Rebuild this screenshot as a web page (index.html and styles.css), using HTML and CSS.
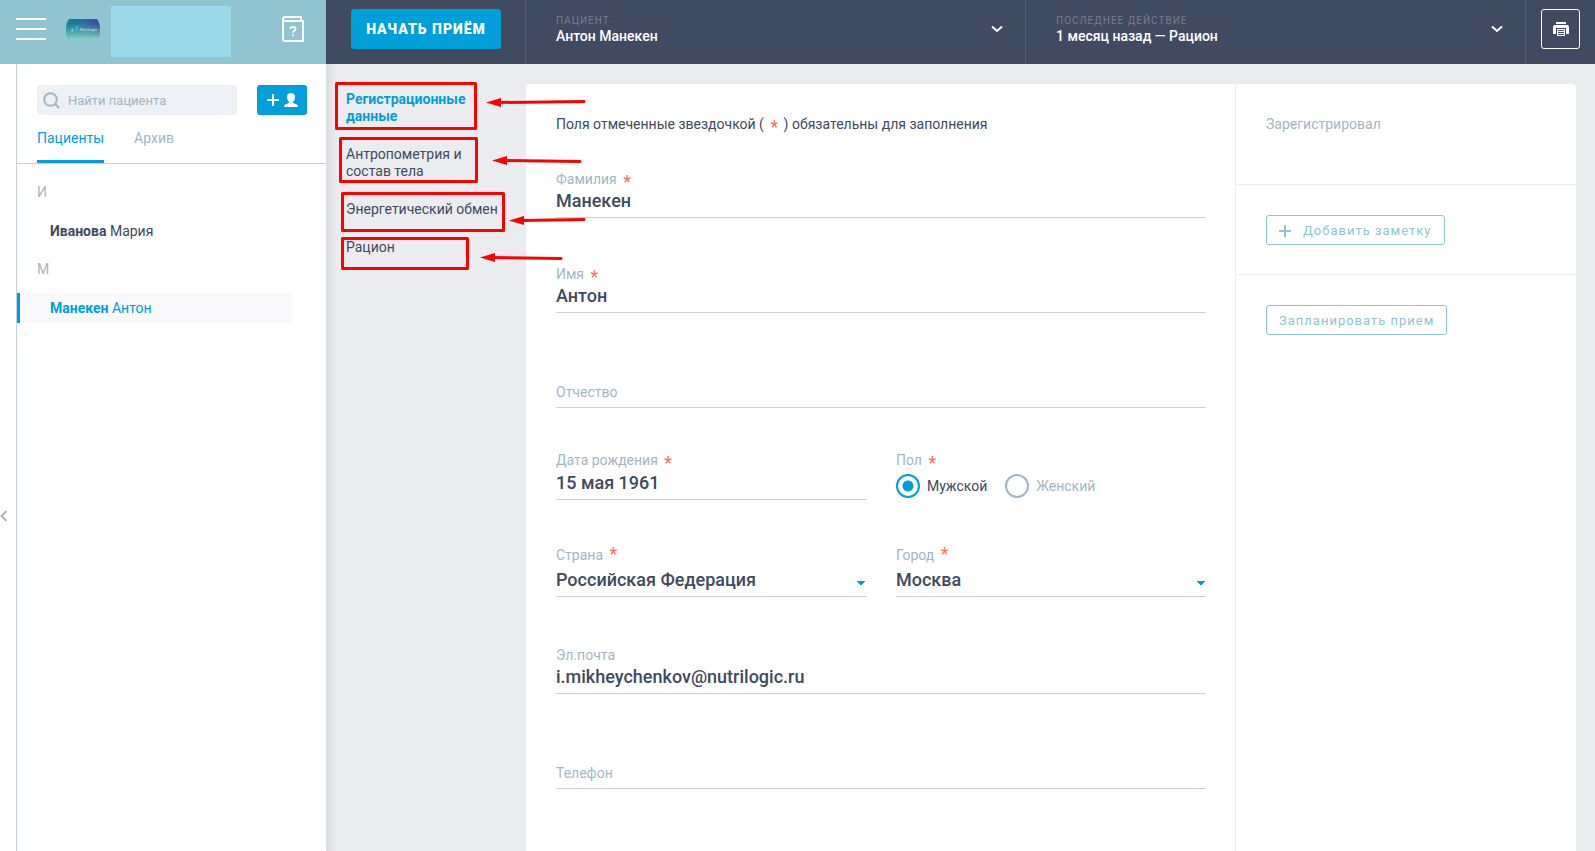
FILE: index.html
```html
<!DOCTYPE html>
<html lang="ru">
<head>
<meta charset="utf-8">
<title>Карта пациента</title>
<link rel="stylesheet" href="styles.css">
</head>
<body>
<div class="page">
  <header class="header">
    <div class="brand">
      <button class="icon-button" type="button" aria-label="Меню">
        <svg width="30" height="22" viewBox="0 0 30 22"><path d="M0 1h30M0 11h30M0 21h30" stroke="#fff" stroke-width="2"/></svg>
      </button>
      <svg class="brand-logo" width="34" height="20" viewBox="0 0 34 20">
        <defs>
          <linearGradient id="logoTop" x1="0" x2="1"><stop offset="0" stop-color="#128390"/><stop offset=".5" stop-color="#2a6f9f"/><stop offset="1" stop-color="#4143a0"/></linearGradient>
          <linearGradient id="logoFade" x1="0" x2="0" y1="0" y2="1"><stop offset=".2" stop-color="#5cc0b0" stop-opacity="0"/><stop offset="1" stop-color="#84d0c4"/></linearGradient>
        </defs>
        <path d="M3 0h28q3 4 3 10t-3 10H3Q0 16 0 10T3 0z" fill="url(#logoTop)"/>
        <path d="M3 0h28q3 4 3 10t-3 10H3Q0 16 0 10T3 0z" fill="url(#logoFade)"/>
        <path d="M7 9q-3 2-1 4 2-1 1-4z" fill="#5fe0a8"/><path d="M9 7h3v2q0 2-2 3 1-3-1-5z" fill="#3db4f0"/>
        <text class="logo-text" x="14" y="12">Nutrilogic</text>
      </svg>
      <div class="brand-plate"></div>
      <button class="icon-button help-button" type="button" aria-label="Справка">
        <svg width="22" height="26" viewBox="0 0 22 26"><path d="M19 5V1H3.500Q1 1 1 3v19.500Q1 25 3.500 25H21V5H3.500Q1 5 1 3" fill="none" stroke="#fff" stroke-width="2"/><path d="M8.500 13q0-2.200 2.500-2.200t2.500 2.200q0 1-1.300 1.800T11 16.800M11 18.300v2" fill="none" stroke="#fff" stroke-width="1.800"/></svg>
      </button>
    </div>
    <div class="start"><button class="start-button" type="button">НАЧАТЬ ПРИЁМ</button></div>
    <button class="summary" type="button">
      <span class="summary-text"><span class="summary-label">ПАЦИЕНТ</span><span class="summary-value">Антон Манекен</span></span>
      <svg width="12" height="8" viewBox="0 0 12 8"><path d="M1 1.500l5 4.500 5-4.500" fill="none" stroke="#fff" stroke-width="2"/></svg>
    </button>
    <button class="summary" type="button">
      <span class="summary-text"><span class="summary-label">ПОСЛЕДНЕЕ ДЕЙСТВИЕ</span><span class="summary-value">1 месяц назад — Рацион</span></span>
      <svg width="12" height="8" viewBox="0 0 12 8"><path d="M1 1.500l5 4.500 5-4.500" fill="none" stroke="#fff" stroke-width="2"/></svg>
    </button>
    <div class="print">
      <button class="print-button" type="button" aria-label="Печать">
        <svg width="16" height="14" viewBox="0 0 16 14"><path d="M3 0h10v2H3zM2 3h12q2 0 2 2v7h-3V6H3v6H0V5q0-2 2-2z" fill="#fff"/><path d="M4 7h8v7H4z" fill="#fff"/><path d="M5 8.500h6M5 10.500h6M5 12.500h6" stroke="#404a60"/></svg>
      </button>
    </div>
  </header>

  <div class="body">
    <div class="rail">
      <button class="icon-button" type="button" aria-label="Свернуть список">
        <svg width="8" height="12" viewBox="0 0 8 12"><path d="M6.500 1L1.500 6l5 5" fill="none" stroke="#a3b6c6" stroke-width="2"/></svg>
      </button>
    </div>
    <aside class="patients">
      <div class="search-row">
        <label class="search">
          <svg width="17" height="17" viewBox="0 0 17 17"><circle cx="7.500" cy="7.500" r="6.300" fill="none" stroke="#a3b6c6" stroke-width="2"/><path d="M12 12l4 4" stroke="#a3b6c6" stroke-width="2"/></svg>
          <input class="search-input" type="text" placeholder="Найти пациента" aria-label="Найти пациента">
        </label>
        <button class="add-button" type="button" aria-label="Добавить пациента">
          <svg width="12" height="12" viewBox="0 0 12 12"><path d="M6 0v12M0 6h12" stroke="#fff" stroke-width="2"/></svg>
          <svg width="14" height="14" viewBox="0 0 14 14"><path d="M7 0q4 0 4 4 0 3-2 5v1l4 1.500q1 .5 1 2.500H0q0-2 1-2.500L5 10V9Q3 7 3 4q0-4 4-4z" fill="#fff"/></svg>
        </button>
      </div>
      <nav class="tabs">
        <a class="tab tab-active" href="#patients">Пациенты</a>
        <a class="tab" href="#archive">Архив</a>
      </nav>
      <div class="list">
        <div class="letter">И</div>
        <a class="patient" href="#ivanova"><b>Иванова</b> Мария</a>
        <div class="letter">М</div>
        <a class="patient patient-active" href="#maneken"><b>Манекен</b> Антон</a>
      </div>
    </aside>

    <main class="content">
      <nav class="sections">
        <a class="section section-active" href="#registration">Регистрационные данные</a>
        <a class="section" href="#anthropometry">Антропометрия и состав тела</a>
        <a class="section" href="#energy">Энергетический обмен</a>
        <a class="section" href="#diet">Рацион</a>
      </nav>

      <div class="card">
        <form class="form">
          <p class="hint">Поля отмеченные звездочкой ( <span class="star star-low star-inline">*</span> ) обязательны для заполнения</p>
          <div class="field">
            <label class="label" for="surname">Фамилия <span class="star star-low">*</span></label>
            <input class="value" id="surname" type="text" value="Манекен">
          </div>
          <div class="field">
            <label class="label" for="name">Имя <span class="star star-low">*</span></label>
            <input class="value" id="name" type="text" value="Антон">
          </div>
          <div class="field field-empty">
            <input class="value" id="patronymic" type="text">
            <label class="label" for="patronymic">Отчество</label>
          </div>
          <div class="pair pair-birth">
            <div class="field">
              <label class="label" for="birth">Дата рождения <span class="star star-low">*</span></label>
              <input class="value" id="birth" type="text" value="15 мая 1961">
            </div>
            <fieldset class="field gender">
              <legend class="label">Пол <span class="star star-low">*</span></legend>
              <div class="radios">
                <label class="radio"><input class="radio-input" type="radio" name="gender" checked>Мужской</label>
                <label class="radio"><input class="radio-input" type="radio" name="gender">Женский</label>
              </div>
            </fieldset>
          </div>
          <div class="pair pair-place">
            <div class="field">
              <label class="label" for="country">Страна <span class="star">*</span></label>
              <select class="value value-select" id="country"><option>Российская Федерация</option></select>
            </div>
            <div class="field">
              <label class="label" for="city">Город <span class="star">*</span></label>
              <select class="value value-select" id="city"><option>Москва</option></select>
            </div>
          </div>
          <div class="field field-contact">
            <label class="label" for="email">Эл.почта</label>
            <input class="value" id="email" type="text" value="i.mikheychenkov@nutrilogic.ru">
          </div>
          <div class="field field-empty">
            <input class="value" id="phone" type="text">
            <label class="label" for="phone">Телефон</label>
          </div>
        </form>

        <aside class="side">
          <div class="side-block side-author">Зарегистрировал</div>
          <div class="side-block">
            <button class="outline-button" type="button">
              <svg width="12" height="12" viewBox="0 0 12 12"><path d="M6 0v12M0 6h12" stroke="#8fc4d0" stroke-width="2"/></svg>
              Добавить заметку
            </button>
          </div>
          <div class="side-block side-last">
            <button class="outline-button" type="button">Запланировать прием</button>
          </div>
        </aside>
      </div>
    </main>
  </div>

  <svg class="marks" width="600" height="280" viewBox="0 0 600 280" aria-hidden="true">
    <g fill="none" stroke="#f00" stroke-width="3" stroke-linejoin="round">
      <rect x="336.500" y="83.500" width="139" height="45"/>
      <rect x="340.500" y="138.500" width="136" height="43"/>
      <rect x="342.500" y="193.500" width="161" height="37"/>
      <rect x="342.500" y="238.500" width="125" height="30"/>
    </g>
    <g fill="none" stroke="#f00" stroke-width="3" stroke-linecap="round">
      <path d="M498 102.500L584 101.500M504 160.500l76 1M521 220.500l63-1M492 257.500l69 1"/>
    </g>
    <path d="M486 102.500l15-4.500v9zM492 160.500l15-4.500v9zM509 220.500l15-4.500v9zM480 257.500l15-4.500v9z" fill="#f00"/>
  </svg>
</div>
</body>
</html>
```
FILE: styles.css
```css
*, *::before, *::after { box-sizing: border-box; }

body {
  margin: 0;
  font: 14px/20px Roboto, "Liberation Sans", sans-serif;
  color: #404a60;
}

button, input, select { font: inherit; color: inherit; margin: 0; }
button { cursor: pointer; }
a { color: inherit; text-decoration: none; }
svg { display: block; flex: none; }
b { font-weight: 700; }

.page {
  position: relative;
  display: flex;
  flex-direction: column;
  min-height: 100vh;
}

/* Header */
.header { display: flex; height: 64px; background: #404a60; }

.brand {
  display: flex;
  align-items: center;
  flex: none;
  width: 326px;
  padding: 0 22px 6px 16px;
  background: #8fc4d0;
}
.icon-button { padding: 0; border: 0; background: none; }
.brand-logo { margin-left: 20px; }
.logo-text { font-size: 4px; fill: #bfe6ee; }
.brand-plate { width: 120px; height: 51px; margin: 4px 0 0 11px; background: #9ad9ea; }
.help-button { margin-left: auto; }

.start {
  flex: none;
  width: 200px;
  padding: 9px 25px;
  border-right: 1px solid #585f73;
}
.start-button {
  width: 150px;
  height: 40px;
  padding: 0;
  border: 0;
  border-radius: 3px;
  background: #009fd9;
  color: #fff;
  font-weight: 900;
  letter-spacing: 1px;
}

.summary {
  display: flex;
  flex: 1;
  justify-content: space-between;
  align-items: center;
  padding: 0 22px 6px 30px;
  border: 0;
  border-right: 1px solid #585f73;
  background: none;
  text-align: left;
}
.summary-text { display: flex; flex-direction: column; padding-top: 2px; }
.summary-label { color: #767d8f; font-size: 10px; line-height: 12px; letter-spacing: 1px; }
.summary-value { color: #fff; font-weight: 500; line-height: 18px; }

.print { flex: none; padding: 9px 15px; }
.print-button {
  display: flex;
  align-items: center;
  justify-content: center;
  width: 39px;
  height: 40px;
  padding: 0;
  border: 1px solid #fff;
  border-radius: 3px;
  background: none;
}

/* Patient list */
.body { display: flex; flex: 1; }
.rail { display: flex; align-items: center; flex: none; width: 16px; padding-top: 116px; }

.patients {
  flex: none;
  width: 310px;
  padding-top: 21px;
  border-left: 1px solid #c5d2dc;
}
.search-row { display: flex; justify-content: space-between; padding: 0 19px 0 20px; }
.search {
  display: flex;
  align-items: center;
  gap: 8px;
  width: 200px;
  height: 30px;
  padding-left: 6px;
  border-radius: 3px;
  background: #edf0f4;
}
.search-input { flex: 1; min-width: 0; padding: 2px 0 0; border: 0; outline: 0; background: none; font-size: 13px; }
.search-input::placeholder { color: #a3b6c6; opacity: 1; }
.add-button {
  display: flex;
  align-items: center;
  justify-content: center;
  gap: 5px;
  width: 50px;
  height: 30px;
  padding: 0;
  border: 0;
  border-radius: 3px;
  background: #009fd9;
}

.tabs {
  display: flex;
  gap: 30px;
  padding: 13px 20px 0;
  border-bottom: 1px solid #c5d2dc;
  color: #a3b6c6;
}
.tab { height: 35px; border-bottom: 3px solid transparent; }
.tab-active { border-color: #009fd9; color: #009fd9; }

.list { padding: 18px 34px 0 0; }
.letter { padding-left: 20px; color: #a3b6c6; }
.patient {
  display: block;
  margin: 14px 0 13px;
  padding: 5px 0 5px 30px;
  border-left: 3px solid transparent;
}
.patient-active { border-color: #009fd9; background: #f9f9fb; color: #009fd9; }

/* Content */
.content {
  display: flex;
  flex: 1;
  padding: 20px 19px 0 0;
  background: linear-gradient(90deg, #dcdde2, #ebecf0 10px);
}
.sections {
  display: flex;
  flex-direction: column;
  gap: 21px;
  flex: none;
  width: 200px;
  padding: 7px 20px;
  line-height: 17px;
}
.section { margin-right: -20px; padding-right: 40px; }
.section:nth-child(n + 3) { padding-right: 0; }
.section-active { color: #009fd9; font-weight: 700; }

.card {
  display: flex;
  flex: 1;
  border-radius: 4px 4px 0 0;
  background: #fff;
}
.form { flex: 1; padding: 30px 29px 30px 30px; }
.hint { margin: 0 0 35px; }

.star { margin-left: 3px; color: #ff7058; font-size: 18px; line-height: 1px; }
.star-low { vertical-align: -4px; }
.star-inline { margin-right: 2px; }

.field { display: flex; flex-direction: column; margin: 0; padding: 0; border: 0; min-width: 0; }
.field + .field { margin-top: 46px; }
.label { height: 20px; padding: 0; color: #a3b6c6; }
.value {
  width: 100%;
  height: 29px;
  padding: 0 0 6px;
  border: 0;
  border-bottom: 1px solid #c5d2dc;
  border-radius: 0;
  outline: 0;
  background: none;
  font-size: 18px;
  font-weight: 500;
}
.value-select {
  appearance: none;
  padding-bottom: 4px;
  background: conic-gradient(from -45deg at 50% 100%, #009fd9 0 90deg, transparent 0) no-repeat right 13px / 10px 5px;
  background-position: right 0 top 13px;
}

.field-empty { display: grid; grid-template-rows: 20px 29px; }
.field-empty > * { grid-area: 2 / 1; }
.field-empty .label { align-self: start; justify-self: start; padding-top: 3px; }

.pair { display: grid; grid-template-columns: 1fr 1fr; gap: 30px; }
.pair .field + .field { margin-top: 0; }
.pair-birth { margin-top: 42px; }
.pair-birth .label { height: 21px; }
.pair-place { margin-top: 45px; }
.pair-place .label { height: 23px; }
.field-contact { margin-top: 48px; }

.radios { display: flex; gap: 18px; padding-top: 3px; }
.radio { display: flex; align-items: center; gap: 7px; height: 24px; color: #a3b6c6; }
.radio:has(:checked) { color: #404a60; }
.radio-input {
  appearance: none;
  width: 24px;
  height: 24px;
  border: 2px solid #a3b6c6;
  border-radius: 50%;
}
.radio-input:checked {
  border-color: #009fd9;
  background: radial-gradient(circle, #009fd9 5px, transparent 6px);
}

/* Right column */
.side { flex: none; width: 341px; border-left: 1px solid #ebeef1; }
.side-block { padding: 30px 30px 29px; border-bottom: 1px solid #ebeef1; }
.side-author { padding-bottom: 50px; color: #a3b6c6; }
.side-last { border-bottom: 0; }
.outline-button {
  display: flex;
  align-items: center;
  gap: 12px;
  height: 30px;
  padding: 1px 12px 0;
  border: 1px solid #8fc4d0;
  border-radius: 3px;
  background: none;
  color: #8fc4d0;
  font-size: 13px;
  letter-spacing: 1px;
}

/* Red callouts drawn over the section menu */
.marks { position: absolute; top: 0; left: 0; pointer-events: none; }
```
